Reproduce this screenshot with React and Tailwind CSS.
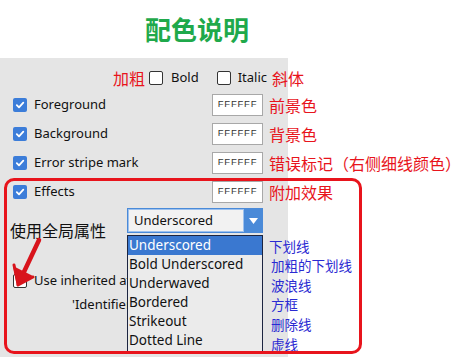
import React from 'react';

const cjk = { fontFamily: '"Noto Sans CJK SC", "Noto Sans", sans-serif' };
const latin = { fontFamily: '"Noto Sans", "Noto Sans CJK SC", sans-serif' };

const Checked = () => (
  <span className="flex h-[14px] w-[14px] shrink-0 items-center justify-center rounded-[2px] bg-[#3c7dd9]">
    <svg width="10" height="10" viewBox="0 0 10 10">
      <path d="M1.8 5.2 L4 7.4 L8.3 2.6" fill="none" stroke="white" strokeWidth="1.8" strokeLinecap="round" strokeLinejoin="round" />
    </svg>
  </span>
);

const Unchecked = () => (
  <span className="block h-[14px] w-[14px] shrink-0 rounded-[2px] border border-[#333] bg-white" />
);

const ColorField = () => (
  <div className="flex h-[22px] w-[51px] shrink-0 items-center justify-center border border-[#a8a8a8] bg-white text-[9.5px] tracking-[0.8px] text-[#333]" style={{ fontFamily: '"Liberation Sans", sans-serif' }}>
    FFFFFF
  </div>
);

const rows = [
  { label: 'Foreground', note: '前景色' },
  { label: 'Background', note: '背景色' },
  { label: 'Error stripe mark', note: '错误标记（右侧细线颜色）' },
  { label: 'Effects', note: '附加效果' },
];

const options = ['Underscored', 'Bold Underscored', 'Underwaved', 'Bordered', 'Strikeout', 'Dotted Line'];
const optionNotes = ['下划线', '加粗的下划线', '波浪线', '方框', '删除线', '虚线'];

export default function App() {
  return (
    <div className="relative h-[357px] w-[464px] overflow-hidden bg-white" style={latin}>
      <div className="flex h-[58px] items-center pl-[145px]">
        <h1 className="text-[26px] font-bold leading-none text-[#1fa94b]" style={cjk}>配色说明</h1>
      </div>

      <div className="relative h-[299px] w-[288px] bg-[#e5e5e5] pt-[7px]">
        <div className="flex h-[25px] w-[464px] items-center whitespace-nowrap pl-[113px] text-[13px] text-[#111]">
          <span className="mr-[4px] shrink-0 text-[16px] text-[#e8141c]" style={cjk}>加粗</span>
          <Unchecked />
          <span className="ml-[8px] shrink-0">Bold</span>
          <span className="ml-[18px] shrink-0"><Unchecked /></span>
          <span className="ml-[7px] shrink-0">Italic</span>
          <span className="ml-[5px] shrink-0 text-[16px] text-[#e8141c]" style={cjk}>斜体</span>
        </div>

        {rows.map((r) => (
          <div key={r.label} className="flex h-[29px] w-[464px] items-center whitespace-nowrap pl-[13px]">
            <Checked />
            <span className="ml-[7px] w-[178px] shrink-0 text-[13px] text-[#111]">{r.label}</span>
            <ColorField />
            <span className="ml-[6px] shrink-0 text-[16px] text-[#e8141c]" style={cjk}>{r.note}</span>
          </div>
        ))}

        <div className="mt-[2px] flex items-start pl-[10px]">
          <span className="mt-[10px] w-[117px] shrink-0 text-[16px] text-[#111]" style={cjk}>使用全局属性</span>
          <div className="flex h-[25px] w-[136px] shrink-0 items-stretch border border-[#4a8ad8] bg-[#4a8ad8]">
            <div className="flex flex-1 items-center border border-[#9dc1ee] bg-[#f2f2f2] pl-[5px] text-[13px] text-[#111]">Underscored</div>
            <div className="flex w-[18px] items-center justify-center">
              <svg width="9" height="6" viewBox="0 0 9 6"><path d="M0 0 H9 L4.5 6 Z" fill="white" /></svg>
            </div>
          </div>
        </div>

        <div className="mt-[29px] flex items-center whitespace-nowrap pl-[13px] text-[13px] text-[#111]">
          <Unchecked />
          <span className="ml-[7px] w-[93px] overflow-hidden">Use inherited attributes</span>
        </div>
        <div className="ml-[72px] mt-[4px] w-[55px] overflow-hidden whitespace-nowrap text-[13px] text-[#111]">'Identifier'</div>

        <div className="absolute left-[127px] top-[177px] flex">
          <div className="w-[136px] border border-[#1c2540] bg-[#ebebeb] text-[13.5px] text-[#111]">
            {options.map((o, i) => (
              <div key={o} className={`flex h-[19px] items-center pl-[1px] ${i === 0 ? 'bg-[#3a78d0] text-white' : ''}`}>{o}</div>
            ))}
          </div>
          <div className="ml-[6px] pt-[1px] text-[13.5px] text-[#2a2ad2]" style={cjk}>
            {optionNotes.map((n, i) => (
              <div key={n} className={`flex h-[19.6px] items-center whitespace-nowrap ${i === 0 ? '' : 'pl-[2px]'}`}>{n}</div>
            ))}
          </div>
        </div>
      </div>

      <div className="pointer-events-none absolute left-[4px] top-[178px] h-[176px] w-[358px] rounded-[10px] border-[3px] border-[#e8141c]" />

      <svg className="absolute left-0 top-[236px]" width="50" height="60" viewBox="0 0 50 60">
        <path d="M39 4 L23 38" stroke="#d8141c" strokeWidth="4.5" strokeLinecap="round" fill="none" />
        <path d="M13 30 L17 50 L33 40 Z" fill="#d8141c" />
        <path d="M14 29 L18 48" stroke="#d8141c" strokeWidth="3" strokeLinecap="round" />
        <path d="M33 41 L18 49" stroke="#d8141c" strokeWidth="3" strokeLinecap="round" />
      </svg>
    </div>
  );
}
